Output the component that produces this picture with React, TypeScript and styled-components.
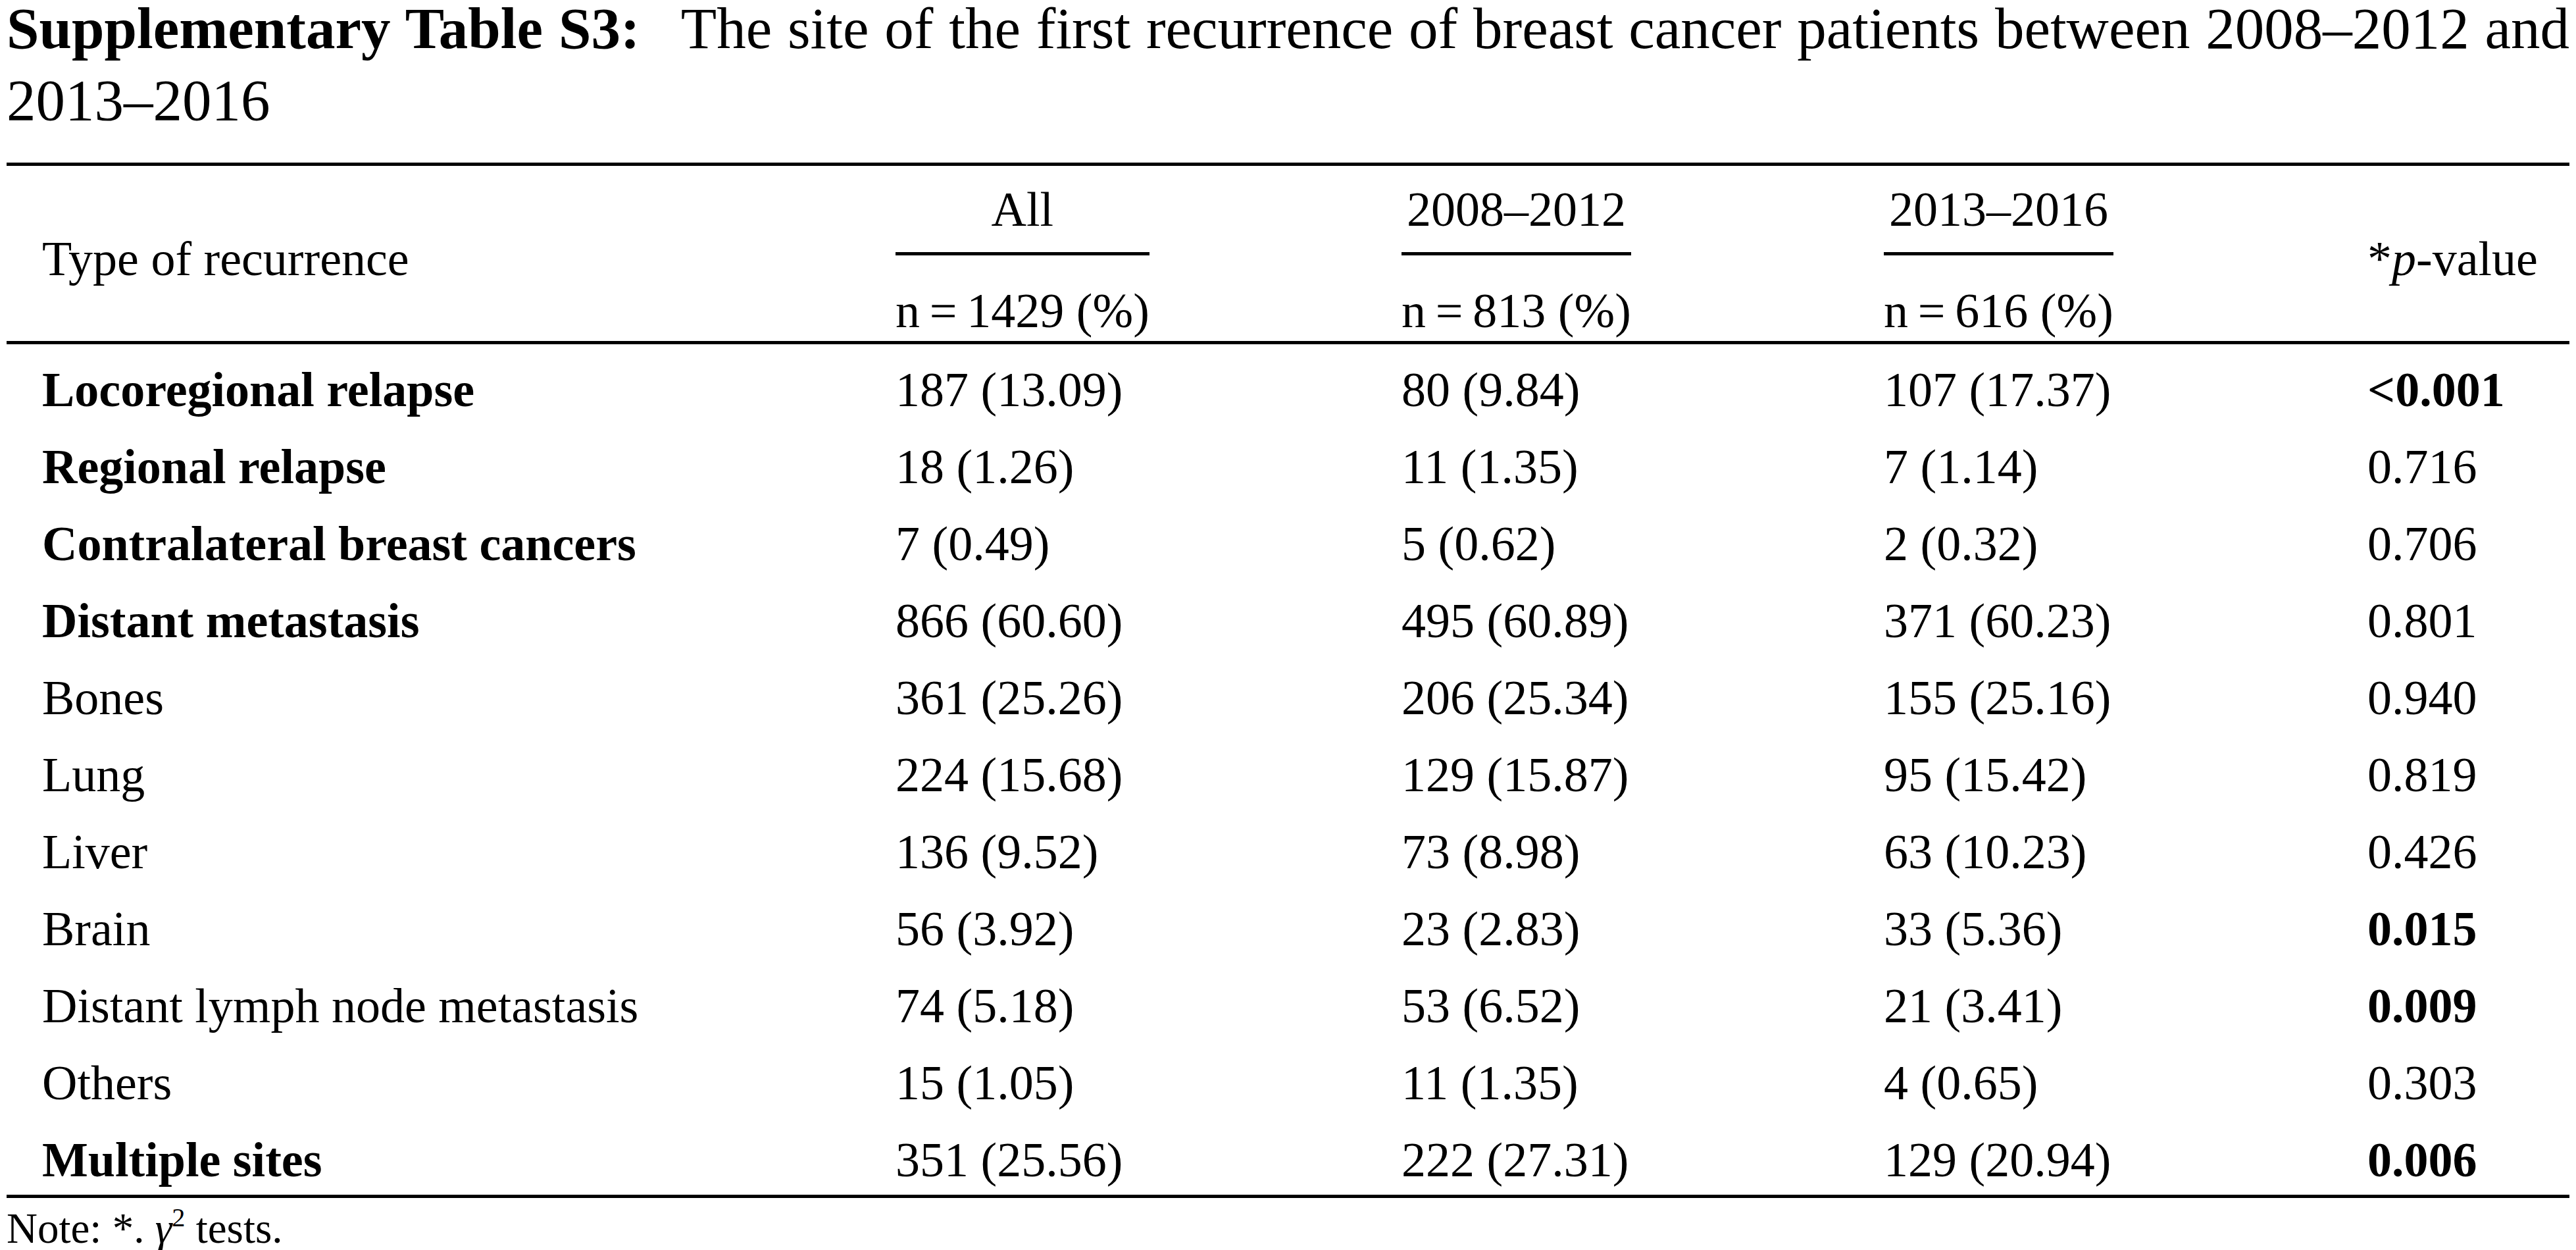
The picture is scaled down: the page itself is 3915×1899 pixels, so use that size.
import React from "react";
import styled, { createGlobalStyle } from "styled-components";

const GlobalStyle = createGlobalStyle`
  html, body {
    margin: 0;
    padding: 0;
    background: #ffffff;
  }
  body {
    font-family: "Liberation Serif", "Times New Roman", serif;
    color: #000000;
  }
`;

const Page = styled.div`
  box-sizing: border-box;
  width: 3915px;
  padding: 0 10px;
  overflow: hidden;
`;

const Title = styled.p`
  margin: -11px 0 0;
  font-size: 89px;
  line-height: 109px;
  text-align: justify;
`;

const TitleLead = styled.strong`
  font-weight: 700;
  margin-right: 0.45em;
`;

const Table = styled.div`
  margin-top: 40px;
  border-top: 5px solid #000;
  border-bottom: 5px solid #000;
  font-size: 74px;
  line-height: 74px;
`;

const cols = "1351px 769px 733px 735px 1fr";

const HeadRow = styled.div`
  display: grid;
  grid-template-columns: ${cols};
  height: 266px;
  border-bottom: 5px solid #000;
`;

const HeadLabel = styled.div<{ $indent?: boolean }>`
  padding-top: 104px;
  padding-left: ${(p) => (p.$indent ? "54px" : "0")};
  white-space: nowrap;
`;

const HeadGroup = styled.div`
  display: inline-flex;
  flex-direction: column;
  align-items: center;
  padding-top: 29px;
  white-space: nowrap;
`;

const GroupRule = styled.div`
  align-self: stretch;
  height: 5px;
  margin: 28px 0 47px;
  background: #000;
`;

const HeadCell = styled.div`
  display: flex;
  align-items: flex-start;
`;

const Body = styled.div`
  padding-bottom: 5px;
`;

const Row = styled.div`
  display: grid;
  grid-template-columns: ${cols};
  padding: 32px 0 11px;
`;

const Cell = styled.div<{ $bold?: boolean; $indent?: boolean }>`
  font-weight: ${(p) => (p.$bold ? 700 : 400)};
  padding-left: ${(p) => (p.$indent ? "54px" : "0")};
  white-space: nowrap;
`;

const Note = styled.p`
  margin: 14px 0 0;
  font-size: 65px;
  line-height: 65px;
`;

const Sup = styled.sup`
  font-size: 0.62em;
  line-height: 0;
  vertical-align: 0.62em;
`;

type RowData = {
  label: string;
  boldLabel: boolean;
  all: string;
  a: string;
  b: string;
  p: string;
  boldP: boolean;
};

const rows: RowData[] = [
  { label: "Locoregional relapse", boldLabel: true, all: "187 (13.09)", a: "80 (9.84)", b: "107 (17.37)", p: "<0.001", boldP: true },
  { label: "Regional relapse", boldLabel: true, all: "18 (1.26)", a: "11 (1.35)", b: "7 (1.14)", p: "0.716", boldP: false },
  { label: "Contralateral breast cancers", boldLabel: true, all: "7 (0.49)", a: "5 (0.62)", b: "2 (0.32)", p: "0.706", boldP: false },
  { label: "Distant metastasis", boldLabel: true, all: "866 (60.60)", a: "495 (60.89)", b: "371 (60.23)", p: "0.801", boldP: false },
  { label: "Bones", boldLabel: false, all: "361 (25.26)", a: "206 (25.34)", b: "155 (25.16)", p: "0.940", boldP: false },
  { label: "Lung", boldLabel: false, all: "224 (15.68)", a: "129 (15.87)", b: "95 (15.42)", p: "0.819", boldP: false },
  { label: "Liver", boldLabel: false, all: "136 (9.52)", a: "73 (8.98)", b: "63 (10.23)", p: "0.426", boldP: false },
  { label: "Brain", boldLabel: false, all: "56 (3.92)", a: "23 (2.83)", b: "33 (5.36)", p: "0.015", boldP: true },
  { label: "Distant lymph node metastasis", boldLabel: false, all: "74 (5.18)", a: "53 (6.52)", b: "21 (3.41)", p: "0.009", boldP: true },
  { label: "Others", boldLabel: false, all: "15 (1.05)", a: "11 (1.35)", b: "4 (0.65)", p: "0.303", boldP: false },
  { label: "Multiple sites", boldLabel: true, all: "351 (25.56)", a: "222 (27.31)", b: "129 (20.94)", p: "0.006", boldP: true },
];

const groups = [
  { top: "All", bottom: "n\u2009=\u20091429 (%)" },
  { top: "2008–2012", bottom: "n\u2009=\u2009813 (%)" },
  { top: "2013–2016", bottom: "n\u2009=\u2009616 (%)" },
];

export default function App() {
  return (
    <>
      <GlobalStyle />
      <Page>
        <Title>
          <TitleLead>Supplementary Table S3:</TitleLead> The site of the first recurrence of breast
          cancer patients between 2008–2012 and 2013–2016
        </Title>
        <Table>
          <HeadRow>
            <HeadLabel $indent>Type of recurrence</HeadLabel>
            {groups.map((g) => (
              <HeadCell key={g.top}>
                <HeadGroup>
                  <span>{g.top}</span>
                  <GroupRule />
                  <span>{g.bottom}</span>
                </HeadGroup>
              </HeadCell>
            ))}
            <HeadLabel>
              *<i>p</i>-value
            </HeadLabel>
          </HeadRow>
          <Body>
            {rows.map((r) => (
              <Row key={r.label}>
                <Cell $indent $bold={r.boldLabel}>
                  {r.label}
                </Cell>
                <Cell>{r.all}</Cell>
                <Cell>{r.a}</Cell>
                <Cell>{r.b}</Cell>
                <Cell $bold={r.boldP}>{r.p}</Cell>
              </Row>
            ))}
          </Body>
        </Table>
        <Note>
          Note: *. <i>γ</i>
          <Sup>2</Sup> tests.
        </Note>
      </Page>
    </>
  );
}
